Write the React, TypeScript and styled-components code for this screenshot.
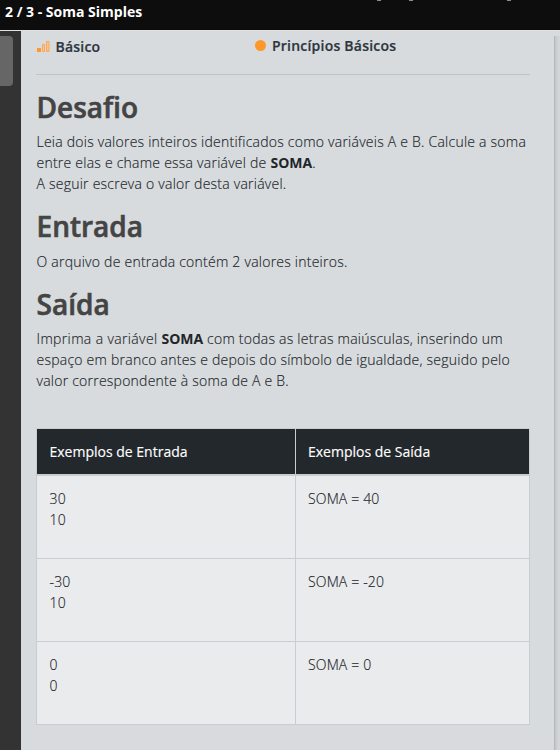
import React from "react";
import styled, { createGlobalStyle } from "styled-components";

const GlobalStyle = createGlobalStyle`
  *, *::before, *::after { box-sizing: border-box; }
  body {
    margin: 0;
    overflow: hidden;
    background: #d7dbde;
    color: #212529;
    font-family: "Open Sans", "Noto Sans", sans-serif;
    font-size: 14px;
    font-weight: 300;
    line-height: 21px;
  }
`;

const Page = styled.div`
  display: flex;
  flex-direction: column;
  width: 560px;
  height: 750px;
`;

const TopBar = styled.header`
  position: relative;
  display: flex;
  flex: none;
  height: 30px;
  padding: 2px 5px 0;
  background: #0d0d0d;
  color: #fff;
  font-size: 14px;
  font-weight: 700;
  line-height: 20px;
  white-space: nowrap;
`;

const Descenders = styled.svg`
  position: absolute;
  top: 0;
  left: 376px;
`;

const Body = styled.div`
  display: flex;
  flex: 1;
  min-height: 0;
  border-top: 1px solid #dfe2e4;
`;

const Rail = styled.aside`
  flex: none;
  width: 21px;
  padding-top: 5px;
  background: #333;
`;

const RailHandle = styled.div`
  width: 13px;
  height: 50px;
  border-radius: 0 4px 4px 0;
  background: #666;
`;

const Content = styled.main`
  flex: 1;
  padding: 0 24px 0 15px;
`;

const Edge = styled.div`
  flex: none;
  width: 6px;
  margin-top: 5px;
  background: linear-gradient(90deg, #abafb2 0, #bec2c5 1px, #c9cdd0 2px, #d0d4d7 4px, #d4d8db 6px);
`;

const TagRow = styled.div`
  display: grid;
  grid-template-columns: 219px 1fr;
  height: 44px;
  border-bottom: 1px solid #c0c4c8;
`;

const Tag = styled.div<{ $gap: number; $top: number }>`
  display: flex;
  align-items: flex-start;
  gap: ${(p) => p.$gap}px;
  padding-top: ${(p) => p.$top}px;
  color: #2d353d;
  font-weight: 600;
  letter-spacing: 0.22px;
  white-space: nowrap;
  -webkit-text-stroke: 0.2px currentColor;
  svg { flex: none; }
`;

const LevelIcon = styled.svg`
  margin: 5px 0 0 1px;
`;

const Dot = styled.span`
  width: 11px;
  height: 11px;
  margin-top: 5px;
  border-radius: 50%;
  background: #ff982b;
`;

const Section = styled.section`
  margin-top: 15px;
  padding-left: 0.5px;
`;

const Heading = styled.h2<{ $gap?: number }>`
  margin: 0 0 ${(p) => p.$gap ?? 7}px;
  color: #444;
  font-size: 28px;
  font-weight: 600;
  line-height: 34px;
  -webkit-text-stroke: 0.6px currentColor;
`;

const Text = styled.p`
  margin: 0;
  letter-spacing: 0.235px;
  white-space: nowrap;
  -webkit-text-stroke: 0.15px currentColor;
  strong { font-weight: 700; letter-spacing: 0; -webkit-text-stroke: 0; }
`;

const Lead = styled.span`
  letter-spacing: 0.36px;
`;

const Table = styled.table`
  width: 494px;
  margin-top: 37px;
  border-collapse: collapse;
  table-layout: fixed;
  background: #eaebed;
`;

const HeadCell = styled.th`
  height: 46px;
  padding: 0 12px;
  border: 1px solid #c9cdd2;
  border-bottom-width: 2px;
  background: #23282c;
  color: #fff;
  font-weight: 400;
  text-align: left;
  -webkit-text-stroke: 0.15px currentColor;
  &:first-child { padding-left: 12.5px; }
`;

const Row = styled.tr`
  height: 83px;
  &:first-child { height: 84px; }
`;

const Cell = styled.td`
  padding: 12px;
  border: 1px solid #c9cdd2;
  letter-spacing: 0.15px;
  vertical-align: top;
  -webkit-text-stroke: 0.15px currentColor;
  &:first-child { padding-left: 12.5px; }
`;

const samples = [
  { input: ["30", "10"], output: "SOMA = 40" },
  { input: ["-30", "10"], output: "SOMA = -20" },
  { input: ["0", "0"], output: "SOMA = 0" },
];

export default function App() {
  return (
    <>
      <GlobalStyle />
      <Page>
        <TopBar>
          2 / 3 - Soma Simples
          <Descenders width="140" height="1" fill="#8c8c8c">
            <path d="M1 0h4v1H1zM33 0h4v1h-4zM131 0h4v1h-4z" />
          </Descenders>
        </TopBar>
        <Body>
          <Rail><RailHandle /></Rail>
          <Content>
            <TagRow>
              <Tag $gap={5.5} $top={5}>
                <LevelIcon width="13" height="11" viewBox="0 0 13 11">
                  <rect x="0" y="7" width="4" height="4" fill="#ff982b" />
                  <path d="M5.5 3.5h2v7h-2zM9.5 .5h2.5v10H9.5z" fill="#f9c48f" stroke="#fba65a" />
                </LevelIcon>
                Básico
              </Tag>
              <Tag $gap={6} $top={4}><Dot />Princípios Básicos</Tag>
            </TagRow>
            <Section>
              <Heading>Desafio</Heading>
              <Text>
                Leia dois valores inteiros identificados como variáveis A e B. Calcule a soma<br />
                entre elas e chame essa variável de <strong>SOMA</strong>.<br />
                A seguir escreva o valor desta variável.
              </Text>
            </Section>
            <Section>
              <Heading $gap={8}>Entrada</Heading>
              <Text>O arquivo de entrada contém 2 valores inteiros.</Text>
            </Section>
            <Section>
              <Heading>Saída</Heading>
              <Text>
                <Lead>Imprima a variável </Lead><strong>SOMA</strong> com todas as letras maiúsculas, inserindo um<br />
                espaço em branco antes e depois do símbolo de igualdade, seguido pelo<br />
                valor correspondente à soma de A e B.
              </Text>
            </Section>
            <Table>
              <colgroup><col style={{ width: 259 }} /><col /></colgroup>
              <thead>
                <tr><HeadCell>Exemplos de Entrada</HeadCell><HeadCell>Exemplos de Saída</HeadCell></tr>
              </thead>
              <tbody>
                {samples.map((s) => (
                  <Row key={s.output}>
                    <Cell>{s.input[0]}<br />{s.input[1]}</Cell>
                    <Cell>{s.output}</Cell>
                  </Row>
                ))}
              </tbody>
            </Table>
          </Content>
          <Edge />
        </Body>
      </Page>
    </>
  );
}
